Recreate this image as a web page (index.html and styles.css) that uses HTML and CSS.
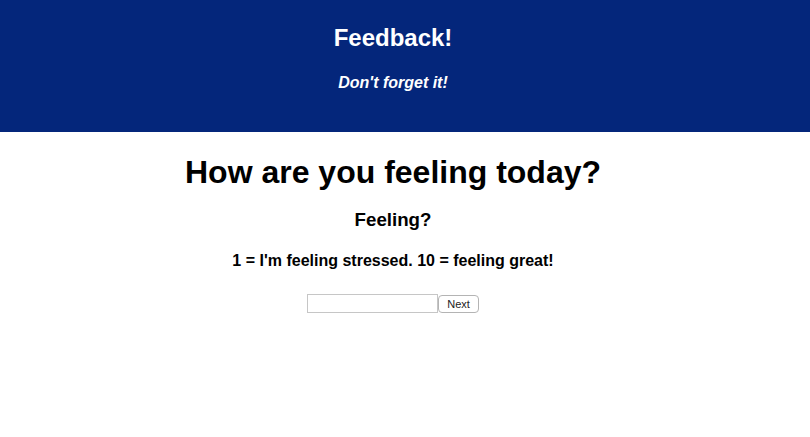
FILE: index.html
```html
<!DOCTYPE html>
<html>
<head>
<meta charset="utf-8">
<link rel="stylesheet" href="styles.css">
</head>
<body>
<header class="banner">
  <div class="inner">
    <h1 class="banner-title">Feedback!</h1>
    <h3 class="banner-sub">Don't forget it!</h3>
  </div>
</header>
<main class="content">
  <h1 class="question">How are you feeling today?</h1>
  <h3 class="label">Feeling?</h3>
  <h4 class="hint">1 = I'm feeling stressed. 10 = feeling great!</h4>
  <form class="form">
    <input class="field" type="text"><button class="next" type="button">Next</button>
  </form>
</main>
</body>
</html>
```
FILE: styles.css
```css
html, body {
  margin: 0;
  padding: 0;
  background: #fff;
  font-family: "Liberation Sans", Arial, sans-serif;
}
.banner {
  background: #04267b;
  color: #fff;
  height: 132px;
  padding-top: 24px;
  box-sizing: border-box;
}
.inner, .content {
  width: 786px;
  text-align: center;
}
.banner-title {
  font-size: 24px;
  line-height: 28px;
  margin: 0;
}
.banner-sub {
  font-size: 16px;
  font-style: italic;
  line-height: 19px;
  margin: 21px 0 0;
}
.question {
  font-size: 32px;
  line-height: 37px;
  margin: 22px 0 0;
}
.label {
  font-size: 18.7px;
  line-height: 22px;
  margin: 18px 0 0;
}
.hint {
  font-size: 16px;
  line-height: 19px;
  margin: 20px 0 0;
}
.form {
  margin-top: 24px;
  display: flex;
  justify-content: center;
  align-items: flex-start;
}
.field {
  width: 131px;
  height: 19px;
  box-sizing: border-box;
  border: 1px solid #c6c6c6;
  margin: 0;
  padding: 1px 3px;
  font-size: 13px;
}
.next {
  width: 41px;
  height: 18px;
  margin: 1px 0 0;
  box-sizing: border-box;
  border: 1px solid #b4b4b4;
  border-radius: 4px;
  background: #fff;
  font-family: "Liberation Sans", Arial, sans-serif;
  font-size: 11px;
  color: #222;
  padding: 0;
  line-height: 16px;
}
```
